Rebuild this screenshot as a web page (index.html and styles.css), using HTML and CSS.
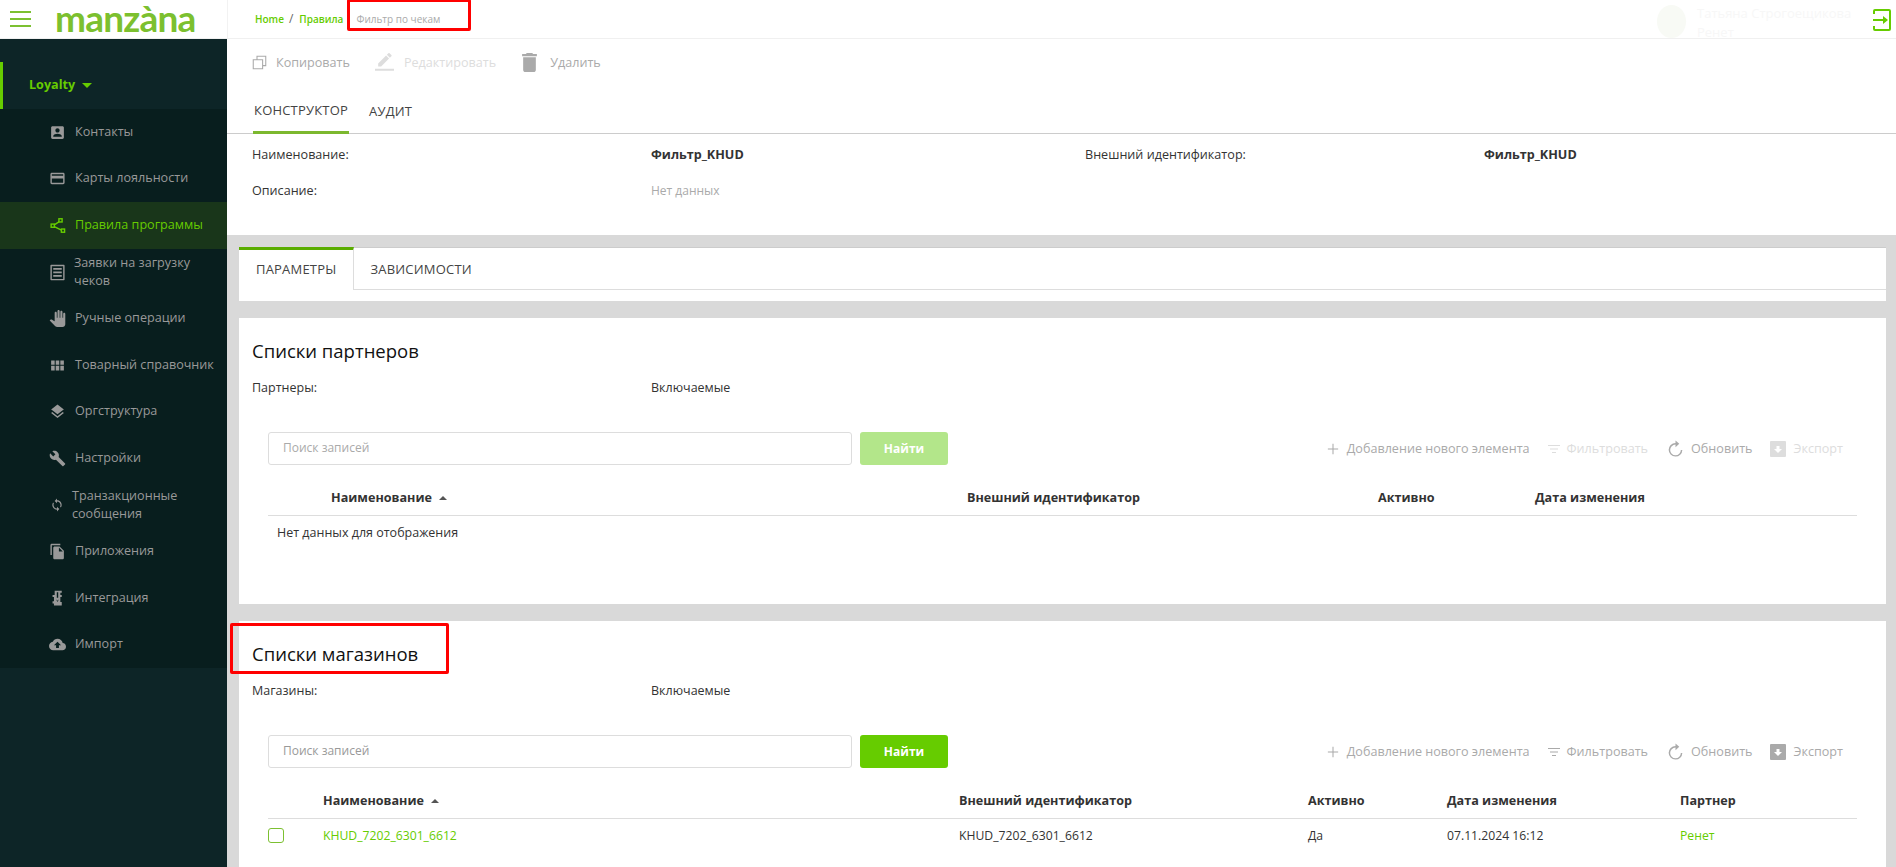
FILE: index.html
```html
<!DOCTYPE html>
<html lang="ru">
<head>
<meta charset="utf-8">
<title>Manzana Loyalty</title>
<link rel="stylesheet" href="styles.css">
</head>
<body>
<div class="app">
  <header class="topbar">
    <div class="brand">
      <span class="burger"><i></i><i></i><i></i></span>
      <span class="logo">manzàna</span>
    </div>
    <div class="crumbs">
      <a class="crumb">Home</a><span class="sep">/</span><a class="crumb">Правила</a>
      <span class="crumb-current">Фильтр по чекам<span class="mark mark-crumb"></span></span>
    </div>
    <div class="user">
      <span class="avatar"></span>
      <span class="user-text"><span>Татьяна Строгоещикова</span><span>Ренет</span></span>
      <svg class="logout" viewBox="0 0 18 22"><rect x="1" y="1" width="16" height="20" rx="1" fill="none" stroke="#66cc00" stroke-width="2"/><rect x="0" y="5" width="3" height="12" fill="#fff"/><path d="M0 10h10V7l5 4-5 4v-3H0z" fill="#66cc00"/></svg>
    </div>
  </header>
  <div class="body">
    <nav class="sidebar">
      <div class="section"><span>Loyalty</span><i class="caret"></i></div>
      <ul class="menu">
        <li class="item"><svg class="ico" viewBox="0 0 24 24"><path d="M3 5v14c0 1.100.89 2 2 2h14c1.100 0 2-.9 2-2V5c0-1.100-.9-2-2-2H5c-1.110 0-2 .9-2 2zm12 4c0 1.660-1.340 3-3 3s-3-1.340-3-3 1.340-3 3-3 3 1.340 3 3zm-9 8c0-2 4-3.100 6-3.100s6 1.100 6 3.100v1H6v-1z"/></svg><span>Контакты</span></li>
        <li class="item"><svg class="ico" viewBox="0 0 24 24"><path d="M20 4H4c-1.110 0-1.990.89-1.990 2L2 18c0 1.110.89 2 2 2h16c1.110 0 2-.89 2-2V6c0-1.110-.89-2-2-2zm0 14H4v-6h16v6zm0-10H4V6h16v2z"/></svg><span>Карты лояльности</span></li>
        <li class="item active"><svg class="ico" viewBox="0 0 24 24"><g fill="none" stroke="#66cc00" stroke-width="2"><rect x="14" y="2.500" width="4.500" height="4.500"/><rect x="3" y="10" width="4.500" height="4.500"/><rect x="17.500" y="17" width="4.500" height="4.500"/><path d="M14.500 6.500 7.500 11M7.500 13.500l10 5"/></g></svg><span>Правила программы</span></li>
        <li class="item tall"><svg class="ico" viewBox="0 0 24 24"><path fill-rule="evenodd" d="M3 1h18a1 1 0 0 1 1 1v20a1 1 0 0 1-1 1H3a1 1 0 0 1-1-1V2a1 1 0 0 1 1-1zm1 2v18h16V3zm2 2.500h12v2.500H6zm0 5h12v2.500H6zm0 5h12v2.500H6z"/></svg><span>Заявки на загрузку чеков</span></li>
        <li class="item"><svg class="ico" viewBox="0 0 24 24"><path d="M23 5.500V20c0 2.200-1.800 4-4 4h-7.300c-1.080 0-2.100-.43-2.850-1.190L1 14.830s1.260-1.230 1.300-1.250c.22-.19.49-.29.79-.29.22 0 .42.06.6.16.04.01 4.310 2.460 4.310 2.460V4c0-.83.67-1.500 1.500-1.500S11 3.170 11 4v7h1V1.500c0-.83.67-1.500 1.500-1.500S15 .67 15 1.500V11h1V2.500c0-.83.67-1.500 1.500-1.500s1.500.67 1.500 1.500V11h1V5.500c0-.83.67-1.500 1.500-1.500s1.500.67 1.500 1.500z"/></svg><span>Ручные операции</span></li>
        <li class="item"><svg class="ico" viewBox="0 0 24 24"><path d="M3 5h5v6H3zm6.500 0h5v6h-5zM16 5h5v6h-5zM3 12.500h5V19H3zm6.500 0h5V19h-5zm6.500 0h5V19h-5z"/></svg><span>Товарный справочник</span></li>
        <li class="item"><svg class="ico" viewBox="0 0 24 24"><path d="M11.990 18.540l-7.370-5.730L3 14.070l9 7 9-7-1.630-1.270-7.380 5.740zM12 16l7.360-5.730L21 9l-9-7-9 7 1.630 1.270L12 16z"/></svg><span>Оргструктура</span></li>
        <li class="item"><svg class="ico" viewBox="0 0 24 24"><path d="M22.700 19l-9.100-9.100c.9-2.300.4-5-1.500-6.900-2-2-5-2.400-7.400-1.300L9 6 6 9 1.600 4.700C.4 7.100.9 10.100 2.900 12.100c1.900 1.900 4.600 2.400 6.900 1.500l9.100 9.100c.4.4 1 .4 1.400 0l2.300-2.300c.5-.4.5-1.100.1-1.400z"/></svg><span>Настройки</span></li>
        <li class="item tall wide"><svg class="ico small" viewBox="0 0 24 24"><path d="M12 4V1L8 5l4 4V6c3.310 0 6 2.690 6 6 0 1.010-.25 1.970-.7 2.800l1.460 1.460C19.540 15.030 20 13.570 20 12c0-4.420-3.580-8-8-8zm0 14c-3.310 0-6-2.690-6-6 0-1.010.25-1.970.7-2.800L5.240 7.740C4.460 8.970 4 10.430 4 12c0 4.420 3.580 8 8 8v3l4-4-4-4v3z"/></svg><span>Транзакционные сообщения</span></li>
        <li class="item"><svg class="ico" viewBox="0 0 24 24"><path d="M16 1H4c-1.100 0-2 .9-2 2v14h2V3h12V1zm-1 4l6 6v10c0 1.100-.9 2-2 2H7.990C6.890 23 6 22.100 6 21l.01-14c0-1.100.89-2 1.990-2h7zm-1 7h5.500L14 6.500V12z"/></svg><span>Приложения</span></li>
        <li class="item"><svg class="ico" viewBox="0 0 24 24"><path fill-rule="evenodd" d="M8 1h10v3h-2v3h2v3h-2v7h2v5H7v-3H5v-3h2v-6H5V7h3zm3 2v8h2V3zm-1 10 2 2 2-2-2 4z"/></svg><span>Интеграция</span></li>
        <li class="item"><svg class="ico" viewBox="0 0 24 24"><path d="M19.350 10.040C18.670 6.590 15.640 4 12 4 9.110 4 6.600 5.640 5.350 8.040 2.340 8.360 0 10.910 0 14c0 3.310 2.690 6 6 6h13c2.760 0 5-2.240 5-5 0-2.640-2.050-4.780-4.650-4.960zM14 13v4h-4v-4H7l5-5 5 5h-3z"/></svg><span>Импорт</span></li>
      </ul>
    </nav>
    <main class="main">
      <section class="head-panel">
        <div class="actions">
          <span class="action"><svg class="a-ico" viewBox="0 0 24 24"><path fill="none" stroke="#aaa" stroke-width="1.700" d="M8 7V2h14v15h-5M2 7.500h15V22H2z"/></svg>Копировать</span>
          <span class="action off"><svg class="a-ico big" viewBox="0 0 24 24"><path fill="#ddd" d="M17.750 7L14 3.250l-10 10V17h3.750l10-10zm2.960-2.960c.39-.39.39-1.020 0-1.410L18.370.29c-.39-.39-1.020-.39-1.410 0L15 2.250 18.750 6l1.960-1.960zM0 20h24v2.500H0z"/></svg>Редактировать</span>
          <span class="action trash"><svg class="a-ico tall-ico" viewBox="5 3 14 18"><path fill="#aaa" d="M6 19c0 1.100.9 2 2 2h8c1.100 0 2-.9 2-2V7H6v12zM19 4h-3.500l-1-1h-5l-1 1H5v2h14V4z"/></svg>Удалить</span>
        </div>
        <div class="tabs-top">
          <span class="tab-top on">КОНСТРУКТОР</span>
          <span class="tab-top">АУДИТ</span>
        </div>
        <dl class="fields">
          <dt>Наименование:</dt><dd class="strong">Фильтр_KHUD</dd>
          <dt>Внешний идентификатор:</dt><dd class="strong">Фильтр_KHUD</dd>
          <dt>Описание:</dt><dd class="muted">Нет данных</dd>
        </dl>
      </section>
      <div class="canvas">
        <section class="card card-tabs">
          <div class="tabs-box">
            <span class="tab-box on">ПАРАМЕТРЫ</span>
            <span class="tab-box">ЗАВИСИМОСТИ</span>
          </div>
        </section>
        <section class="card list">
          <h2 class="title">Списки партнеров</h2>
          <div class="kv"><span>Партнеры:</span><span>Включаемые</span></div>
          <div class="controls disabled">
            <input class="search" placeholder="Поиск записей">
            <button class="find">Найти</button>
            <div class="tools">
              <span class="tool add"><svg class="t-ico p" viewBox="0 0 14 14"><path d="M6.400 1h1.200v5.400H13v1.200H7.600V13H6.400V7.600H1V6.400h5.400z"/></svg>Добавление нового элемента</span>
              <span class="tool dim"><svg class="t-ico" viewBox="0 0 14 14"><path d="M1 3h12v1H1zm2 3.500h8v1H3zM5 10h4v1H5z"/></svg>Фильтровать</span>
              <span class="tool refresh"><svg class="t-ico r" viewBox="0 0 16 18"><path d="M8 2.500V0l4 3.500L8 7V4.300a5.700 5.700 0 1 0 5.700 5.700h1.600A7.300 7.300 0 1 1 8 2.500z"/></svg>Обновить</span>
              <span class="tool dim export"><svg class="t-ico x" viewBox="0 0 16 16"><path fill-rule="evenodd" d="M1 0h14a1 1 0 0 1 1 1v14a1 1 0 0 1-1 1H1a1 1 0 0 1-1-1V1a1 1 0 0 1 1-1zm5.500 5v3H4l4 4 4-4H9.500V5z"/></svg>Экспорт</span>
            </div>
          </div>
          <div class="thead cols-a">
            <span></span><span>Наименование <i class="sort"></i></span><span>Внешний идентификатор</span><span>Активно</span><span>Дата изменения</span>
          </div>
          <div class="empty">Нет данных для отображения</div>
        </section>
        <section class="card list">
          <h2 class="title">Списки магазинов<span class="mark mark-title"></span></h2>
          <div class="kv"><span>Магазины:</span><span>Включаемые</span></div>
          <div class="controls">
            <input class="search" placeholder="Поиск записей">
            <button class="find">Найти</button>
            <div class="tools">
              <span class="tool add"><svg class="t-ico p" viewBox="0 0 14 14"><path d="M6.400 1h1.200v5.400H13v1.200H7.600V13H6.400V7.600H1V6.400h5.400z"/></svg>Добавление нового элемента</span>
              <span class="tool"><svg class="t-ico" viewBox="0 0 14 14"><path d="M1 3h12v1H1zm2 3.500h8v1H3zM5 10h4v1H5z"/></svg>Фильтровать</span>
              <span class="tool refresh"><svg class="t-ico r" viewBox="0 0 16 18"><path d="M8 2.500V0l4 3.500L8 7V4.300a5.700 5.700 0 1 0 5.700 5.700h1.600A7.300 7.300 0 1 1 8 2.500z"/></svg>Обновить</span>
              <span class="tool export"><svg class="t-ico x" viewBox="0 0 16 16"><path fill-rule="evenodd" d="M1 0h14a1 1 0 0 1 1 1v14a1 1 0 0 1-1 1H1a1 1 0 0 1-1-1V1a1 1 0 0 1 1-1zm5.500 5v3H4l4 4 4-4H9.500V5z"/></svg>Экспорт</span>
            </div>
          </div>
          <div class="thead cols-b">
            <span></span><span>Наименование <i class="sort"></i></span><span>Внешний идентификатор</span><span>Активно</span><span>Дата изменения</span><span>Партнер</span>
          </div>
          <div class="trow cols-b">
            <span class="check"></span><a class="link">KHUD_7202_6301_6612</a><span>KHUD_7202_6301_6612</span><span>Да</span><span>07.11.2024 16:12</span><a class="link">Ренет</a>
          </div>
        </section>
      </div>
    </main>
  </div>
</div>
</body>
</html>
```

FILE: styles.css
```css
* { box-sizing: border-box; }
html, body { height: 100%; margin: 0; overflow: hidden; }
body { font-family: "Open Sans", "Liberation Sans", sans-serif; font-size: 12.600px; color: #333; background: #fff; }
.app { display: flex; flex-direction: column; height: 867px; }

.topbar { display: flex; align-items: stretch; height: 39px; flex: none; border-bottom: 1px solid #f0f0f0; background: #fff; }
.brand { width: 228px; flex: none; display: flex; align-items: center; padding-left: 10px; border-right: 1px solid #f2f2f2; }
.burger { display: flex; flex-direction: column; gap: 5px; width: 21px; margin-right: 24px; }
.burger i { display: block; height: 2px; background: #7cc031; }
.logo { font-family: Lato, "Open Sans", sans-serif; font-weight: 700; font-size: 37px; letter-spacing: -.8px; line-height: 38px; color: #7cc02f; margin-top: -3px; }
.crumbs { display: flex; align-items: center; padding-left: 27px; font-size: 10px; font-weight: 600; }
.crumb { color: #66cc00; }
.sep { margin: 0 6px 2px 5px; color: #666; font-weight: 400; font-size: 12px; }
.crumb-current { position: relative; margin-left: 13px; color: #aaa; font-weight: 400; }
.mark { position: absolute; border: 3px solid #f00; border-radius: 2px; pointer-events: none; }
.mark-crumb { left: -9px; top: -13px; width: 124px; height: 32px; }
.user { margin-left: auto; display: flex; align-items: center; padding-right: 5px; }
.avatar { width: 29px; height: 33px; border-radius: 50%; background: #f8faf5; margin: 5px 11px 0 0; }
.user-text { display: flex; flex-direction: column; width: 148px; padding-top: 7px; color: #f7f7f7; font-size: 13px; line-height: 19px; margin-right: 28px; white-space: nowrap; }
.logout { width: 18px; height: 22px; margin-top: 1px; }

.body { flex: 1; display: flex; min-height: 0; }
.sidebar { width: 227px; flex: none; background: #0d2527; padding-top: 23px; }
.section { height: 47px; display: flex; align-items: center; gap: 7px; padding: 0 0 3px 26px; border-left: 3px solid #66cc00; color: #66cc00; font-weight: 700; }
.caret { width: 0; height: 0; border: 5px solid transparent; border-top-color: #66cc00; border-bottom: 0; margin-top: 3px; }
.menu { list-style: none; margin: 0; padding: 0; background: #081e1e; }
.item { height: 46.600px; display: flex; align-items: center; color: #999; line-height: 18px; padding-left: 49px; }
.item span { margin: 0 0 1px 9px; }
.tall span { width: 140px; margin-left: 8px; }
.wide span { margin-left: 8px; }
.active { background: #19361a; color: #66cc00; }
.ico { width: 17px; height: 17px; flex: none; fill: #999; }
.small { width: 14px; height: 14px; margin-left: 1px; }

.main { flex: 1; min-width: 0; display: flex; flex-direction: column; }
.head-panel { height: 196px; flex: none; background: #fff; }
.actions { display: flex; align-items: center; height: 46px; padding-left: 25px; margin-bottom: 2px; color: #aaa; }
.action { display: flex; align-items: center; gap: 9px; margin-right: 25px; }
.off { gap: 10px; color: #ddd; margin-right: 26px; }
.trash { gap: 13px; }
.a-ico { width: 15px; height: 15px; }
.big { width: 19px; height: 19px; }
.tall-ico { width: 15px; height: 19px; }
.tabs-top { display: flex; height: 47px; gap: 19px; padding-left: 26px; border-bottom: 1px solid #ccc; color: #444; font-size: 13px; letter-spacing: .2px; }
.tab-top { display: flex; align-items: center; height: 47px; padding: 1px 1px 0; }
.tab-top.on { border-bottom: 3px solid #7cb82f; }
.fields { margin: 0; padding: 2px 25px 0; display: grid; grid-template-columns: 399px 434px 399px 1fr; grid-auto-rows: 36px; align-items: center; }
.fields dt, .fields dd { margin: 0; }
.strong { font-weight: 700; }
.muted { color: #aaa; font-size: 12px; }

.canvas { flex: 1; min-height: 0; background: #d9d9d9; padding: 12px 10px 0 12px; display: flex; flex-direction: column; gap: 17px; }
.card { background: #fff; flex: none; }
.card-tabs { height: 54px; }
.tabs-box { display: flex; height: 43px; border-top: 1px solid #ccc; border-bottom: 1px solid #ddd; color: #444; font-size: 13px; letter-spacing: .2px; }
.tab-box { display: flex; align-items: center; padding: 0 17px; margin-bottom: -1px; }
.tab-box.on { border-top: 3px solid #5aad00; margin-top: -1px; border-right: 1px solid #ddd; background: #fff; padding-bottom: 3px; }
.tab-box + .tab-box { padding-left: 16px; }

.list { height: 286px; padding: 0 29px 0 13px; }
.list:last-child { height: 250px; }
.title { position: relative; margin: 0; padding-top: 21px; font-size: 18.500px; font-weight: 400; line-height: 24px; color: #111; }
.mark-title { left: -22px; top: 2px; width: 219px; height: 51px; }
.kv { display: grid; grid-template-columns: 399px 1fr; margin-top: 16px; line-height: 18px; font-size: 12.500px; }
.controls { display: flex; align-items: center; height: 33px; margin: 35px 0 0 16px; }
.search { width: 584px; height: 33px; border: 1px solid #ddd; border-radius: 3px; padding: 0 14px 2px; font: 12px "Open Sans", sans-serif; outline: 0; }
.search::placeholder { color: #999; }
.find { width: 88px; height: 33px; margin-left: 8px; border: 0; border-radius: 3px; background: #66cc00; color: #fff; font: 700 12px "Open Sans", sans-serif; }
.disabled .find { background: #b3e68a; }
.disabled .search::placeholder { color: #aaa; }
.tools { margin-left: auto; display: flex; align-items: center; gap: 17px; color: #aaa; padding-right: 14px; }
.tool { display: flex; align-items: center; gap: 6px; }
.add { gap: 8px; }
.dim { color: #ddd; }
.refresh { gap: 8px; margin-left: 3px; }
.export { gap: 8px; }
.t-ico { width: 14px; height: 14px; fill: currentColor; }
.p { width: 12px; height: 12px; }
.r { height: 18px; width: 15px; }
.x { width: 16px; height: 16px; }

.thead, .trow { display: grid; margin-left: 16px; align-items: center; }
.cols-a { grid-template-columns: 63px 636px 411px 157px 1fr; }
.cols-b { grid-template-columns: 55px 636px 349px 139px 233px 1fr; }
.thead { height: 36px; margin-top: 15px; border-bottom: 1px solid #ddd; font-weight: 700; color: #333; }
.sort { display: inline-block; width: 0; height: 0; margin: 0 0 2px 4px; border: 4px solid transparent; border-bottom-color: #555; border-top: 0; }
.empty { margin-left: 25px; padding-top: 1px; line-height: 32px; font-size: 12.500px; }
.trow { height: 33px; font-size: 12.200px; }
.link { color: #66cc00; }
.check { width: 16px; height: 15px; border: 1px solid #7cc031; border-radius: 3px; }
```
